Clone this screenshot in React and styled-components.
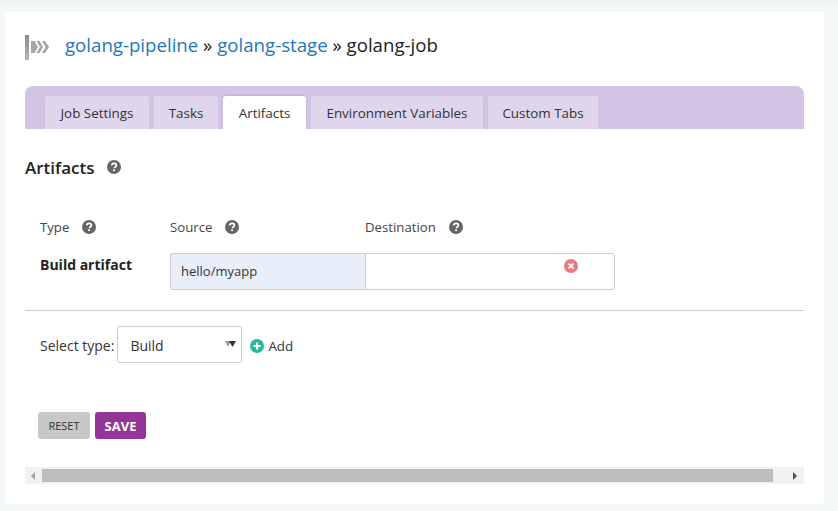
import React from "react";
import styled, { createGlobalStyle } from "styled-components";

const GlobalStyle = createGlobalStyle`
  * { box-sizing: border-box; }
  html, body { margin: 0; height: 100%; }
  body {
    background: #f4f8f9;
    font-family: "Open Sans", "Liberation Sans", sans-serif;
    color: #333;
    overflow: hidden;
  }
`;

const Page = styled.div`
  height: 511px;
  padding: 12px 14px 7px 5px;
  background: linear-gradient(#eef1f2, #f4f8f9 6px);
`;

const Card = styled.main`
  height: 492px;
  background: #fff;
  border-radius: 3px;
  padding: 20px 20px 0;
  display: flex;
  flex-direction: column;
`;

const Header = styled.header`
  height: 30px;
  margin-bottom: 24px;
  display: flex;
  align-items: center;
`;

const Crumbs = styled.h1`
  margin: 0 0 4px 15px;
  font-size: 18.65px;
  font-weight: 400;
  line-height: 28px;
  color: #222;
  white-space: nowrap;
`;

const Crumb = styled.a`
  color: #1f76b8;
  text-decoration: none;
`;

const TabBar = styled.nav`
  height: 43px;
  background: #d3c4e6;
  border-radius: 8px 8px 0 0;
  padding: 10px 0 0 20px;
  display: flex;
  gap: 5px;
`;

const Tab = styled.div`
  height: 33px;
  width: ${(p) => p.$width}px;
  display: flex;
  align-items: center;
  justify-content: center;
  font-size: 13.4px;
  color: #333;
  white-space: nowrap;
  background: ${(p) => (p.$active ? "#fff" : "#dfd6ee")};
  border-radius: 3px 3px 0 0;
  box-shadow: ${(p) => (p.$active ? "0 -1px 2px rgba(0,0,0,0.12)" : "none")};
`;

const SectionTitle = styled.h2`
  margin: 27px 0 0;
  height: 22px;
  display: flex;
  align-items: center;
  gap: 12px;
  font-size: 17px;
  font-weight: 600;
  color: #222;
`;

const Grid = styled.div`
  margin-top: 39px;
  padding-left: 15px;
  display: grid;
  grid-template-columns: 130px 195px 250px;
  grid-template-rows: 20px 37px;
  row-gap: 16px;
  border-bottom: 1px solid #ccc;
  padding-bottom: 20px;
  margin-bottom: 15px;
`;

const ColHead = styled.div`
  display: flex;
  align-items: center;
  gap: 13px;
  font-size: 13.2px;
  color: #444;
  height: 20px;
`;

const RowLabel = styled.div`
  font-size: 14px;
  font-weight: 700;
  color: #222;
  line-height: 18px;
  padding-top: 3px;
`;

const Field = styled.div`
  position: relative;
  height: 37px;
  border: 1px solid #ccc;
  background: ${(p) => (p.$filled ? "#e8effb" : "#fff")};
  border-radius: ${(p) => (p.$filled ? "3px 0 0 3px" : "0 3px 3px 0")};
  border-right-width: ${(p) => (p.$filled ? 0 : "1px")};
  padding: 0 10px 2px;
  display: flex;
  align-items: center;
  font-size: 13px;
  color: #333;
`;

const RemoveIcon = styled.span`
  position: absolute;
  top: 5px;
  left: 198px;
  display: flex;
`;

const AddRow = styled.div`
  display: flex;
  align-items: center;
  padding-left: 15px;
  height: 37px;
  font-size: 14px;
  color: #333;
`;

const SelectLabel = styled.span`
  font-size: 14px;
  margin-right: 3px;
  padding-top: 2px;
`;

const SelectBox = styled.div`
  position: relative;
  width: 125px;
  height: 37px;
  border: 1px solid #ccc;
  border-radius: 3px;
  padding: 2px 0 0 12px;
  display: flex;
  align-items: center;
  font-size: 14px;
  margin-right: 8px;
`;

const Caret = styled.svg`
  position: absolute;
  top: 14px;
  right: 5px;
`;

const AddLink = styled.div`
  display: flex;
  align-items: center;
  gap: 4px;
  font-size: 13.4px;
  color: #333;
  padding-top: 2px;
`;

const Actions = styled.div`
  margin: 49px 0 0 13px;
  display: flex;
  gap: 5px;
`;

const Button = styled.button`
  height: 27px;
  padding: 0;
  width: ${(p) => (p.$primary ? "51px" : "52px")};
  border: 0;
  border-radius: 3px;
  font-family: inherit;
  font-size: ${(p) => (p.$primary ? "13px" : "11px")};
  font-weight: ${(p) => (p.$primary ? 700 : 400)};
  background: ${(p) => (p.$primary ? "#943598" : "#c8c8c8")};
  color: ${(p) => (p.$primary ? "#fff" : "#333")};
`;

const Scrollbar = styled.div`
  margin-top: 28px;
  height: 17px;
  background: #f1f1f1;
  display: flex;
  align-items: center;
`;

const ScrollButton = styled.div`
  width: 17px;
  height: 17px;
  display: flex;
  align-items: center;
  justify-content: center;
`;

const ScrollThumb = styled.div`
  width: 731px;
  height: 13px;
  background: #bdbdbd;
`;

const ScrollGap = styled.div`
  flex: 1;
`;

const Help = ({ size = 14 }) => (
  <svg width={size} height={size} viewBox="0 0 14 14">
    <circle cx="7" cy="7" r="7" fill="#666" />
    <path
      d="M4.700 5.400C4.800 4.100 5.800 3.400 7.100 3.400c1.300 0 2.300.8 2.300 1.900 0 .9-.5 1.300-1.100 1.700-.5.3-.7.5-.7 1v.2"
      fill="none"
      stroke="#fff"
      strokeWidth="1.7"
    />
    <rect x="6.200" y="9.300" width="1.800" height="1.800" fill="#fff" />
  </svg>
);

const PipelineLogo = () => (
  <svg width="25" height="25" viewBox="0 0 25 25">
    <defs>
      <linearGradient id="bar" x1="0" y1="0" x2="0" y2="1">
        <stop offset="0" stopColor="#8a8a8a" />
        <stop offset="1" stopColor="#b5b5b5" />
      </linearGradient>
    </defs>
    <rect x="0" y="0" width="4" height="25" fill="url(#bar)" />
    <path d="M6 6h3.500l3.500 6-3.500 6H6z" fill="#a0a6ac" />
    <path d="M11.500 6h3l3.500 6-3.500 6h-3l3.500-6z" fill="#a0a6ac" />
    <path d="M17 6h3l4 6-4 6h-3l3.500-6z" fill="#a0a6ac" />
  </svg>
);

const tabs = [
  { label: "Job Settings", width: 104 },
  { label: "Tasks", width: 64 },
  { label: "Artifacts", width: 83 },
  { label: "Environment Variables", width: 172 },
  { label: "Custom Tabs", width: 110 },
];

export default function App() {
  return (
    <Page>
      <GlobalStyle />
      <Card>
        <Header>
          <PipelineLogo />
          <Crumbs>
            <Crumb href="#">golang-pipeline</Crumb> » <Crumb href="#">golang-stage</Crumb> » golang-job
          </Crumbs>
        </Header>

        <TabBar>
          {tabs.map((t) => (
            <Tab key={t.label} $width={t.width} $active={t.label === "Artifacts"}>
              {t.label}
            </Tab>
          ))}
        </TabBar>

        <SectionTitle>
          Artifacts
          <Help />
        </SectionTitle>

        <Grid>
          <ColHead>
            Type <Help />
          </ColHead>
          <ColHead>
            Source <Help />
          </ColHead>
          <ColHead>
            Destination <Help />
          </ColHead>
          <RowLabel>Build artifact</RowLabel>
          <Field $filled>hello/myapp</Field>
          <Field>
            <RemoveIcon>
              <svg width="14" height="14" viewBox="0 0 14 14">
                <circle cx="7" cy="7" r="7" fill="#e77b7f" />
                <path d="M4.600 4.600l4.800 4.800M9.400 4.600l-4.800 4.800" stroke="#fff" strokeWidth="2" />
              </svg>
            </RemoveIcon>
          </Field>
        </Grid>

        <AddRow>
          <SelectLabel>Select type:</SelectLabel>
          <SelectBox>
            Build
            <Caret width="11" height="7" viewBox="0 0 11 7">
              <path d="M0 0h6l-3 6z" fill="#999" />
              <path d="M4 0h7L7.500 6z" fill="#333" />
            </Caret>
          </SelectBox>
          <AddLink>
            <svg width="14" height="14" viewBox="0 0 14 14">
              <circle cx="7" cy="7" r="7" fill="#26b8a0" />
              <path d="M7 3.500v7M3.500 7h7" stroke="#fff" strokeWidth="2" />
            </svg>
            Add
          </AddLink>
        </AddRow>

        <Actions>
          <Button>RESET</Button>
          <Button $primary>SAVE</Button>
        </Actions>

        <Scrollbar>
          <ScrollButton>
            <svg width="5" height="8" viewBox="0 0 5 8">
              <path d="M4 0v8L0 4z" fill="#a3a3a3" />
            </svg>
          </ScrollButton>
          <ScrollThumb />
          <ScrollGap />
          <ScrollButton>
            <svg width="5" height="8" viewBox="0 0 5 8">
              <path d="M0 0v8l4-4z" fill="#505050" />
            </svg>
          </ScrollButton>
        </Scrollbar>
      </Card>
    </Page>
  );
}
